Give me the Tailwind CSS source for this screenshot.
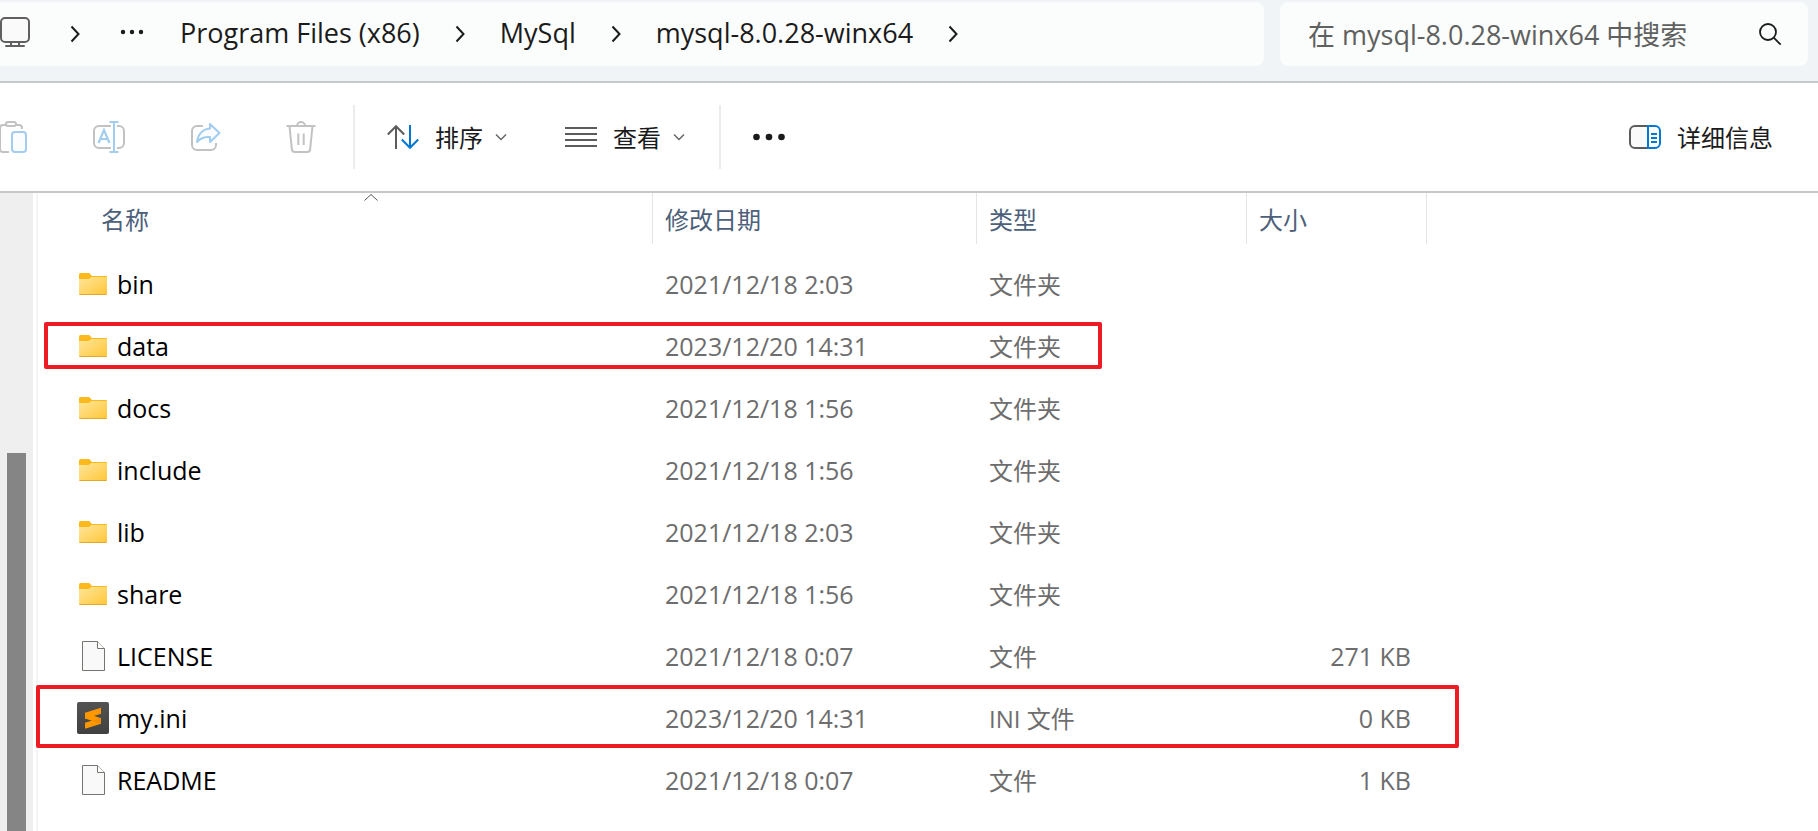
<!DOCTYPE html>
<html lang="zh-CN">
<head>
<meta charset="utf-8">
<meta name="viewport" content="width=device-width, initial-scale=1">
<title>mysql-8.0.28-winx64</title>
<script src="https://cdn.jsdelivr.net/npm/@tailwindcss/browser@4"></script>
</head>
<body class="flex min-h-screen flex-col bg-white font-['Open_Sans','Noto_Sans_CJK_SC',sans-serif] text-2xl text-[#1b1b1b]">

<svg class="absolute size-0" aria-hidden="true">
  <defs>
    <linearGradient id="folder-front" x1="0" y1="0" x2="1" y2="1">
      <stop offset="0" stop-color="#ffe69b"/><stop offset="1" stop-color="#ffc637"/>
    </linearGradient>
    <linearGradient id="editor-tile" x1="0" y1="0" x2="0" y2="1">
      <stop offset="0" stop-color="#535353"/><stop offset="1" stop-color="#404040"/>
    </linearGradient>
  </defs>
  <symbol id="chevron" viewBox="0 0 10 18"><path d="M1.500 1.500 8.500 9l-7 7.500" fill="none" stroke="#1b1b1b" stroke-width="2"/></symbol>
  <symbol id="chevron-down" viewBox="0 0 12 8"><path d="M1 1.500 6 6.500l5-5" fill="none" stroke="#666" stroke-width="1.500"/></symbol>
  <symbol id="folder" viewBox="0 0 32 32">
    <path d="M2 6.500A1.500 1.500 0 0 1 3.500 5H11c1.500 0 2 .6 3 2l1 1h14a1 1 0 0 1 1 1V14H2z" fill="#fbb91c"/>
    <path d="M2 11h8.500c1.500 0 2-.3 3-1.200L14.300 9H29a1 1 0 0 1 1 1v15.500a1.500 1.500 0 0 1-1.500 1.500h-25A1.500 1.500 0 0 1 2 25.500z" fill="url(#folder-front)"/>
    <path d="M2.500 26.500h27" stroke="#e3a72a" stroke-width="1"/>
  </symbol>
  <symbol id="file" viewBox="0 0 32 32">
    <path d="M5.500 1.500h15l7 7v22h-22z" fill="#f9f9f9" stroke="#757570" stroke-width="1"/>
    <path d="M20.500 1.500v7h7" fill="#fff" stroke="#757570" stroke-width="1"/>
  </symbol>
  <symbol id="editor" viewBox="0 0 32 32">
    <rect width="32" height="32" rx="2" fill="url(#editor-tile)"/>
    <path d="M8 10.700 24 5.700v6L14.500 14.700 8 16.700z" fill="#ff9800"/>
    <path d="M8 20.700 24 15.700v6L8 26.700z" fill="#ff9800"/>
    <path d="M8 10.700v5.800l16 5.200v-5.500z" fill="#ff9800"/>
    <path d="M15 18.500 24 16.200v5.500z" fill="#f08c00"/>
  </symbol>
</svg>

<header class="flex h-[83px] items-start gap-4 border-b-2 border-[#c3cacd] bg-[#f1f4f6] pt-0.5 pr-2.5">
  <nav aria-label="路径" class="flex h-16 min-w-0 flex-1 items-center rounded-r-lg bg-[#fbfdfc] pb-1 text-[27px] leading-10 whitespace-nowrap">
    <button aria-label="此电脑" class="mr-10">
      <svg class="h-8 w-[30px]" viewBox="0 0 30 32" fill="none" stroke="#606060" stroke-width="2"><rect x="1" y="2" width="28" height="24" rx="4" fill="#fafafa"/><path d="M11 26v4M19 26v4"/><path d="M6 30h18" stroke-linecap="round"/></svg>
    </button>
    <svg class="mt-1 mr-10 h-[18px] w-2.5" aria-hidden="true"><use href="#chevron"/></svg>
    <button aria-label="更多位置" class="mr-9">
      <svg class="h-6 w-6" viewBox="0 0 24 24" fill="#1b1b1b"><circle cx="3" cy="12" r="2.200"/><circle cx="12" cy="12" r="2.200"/><circle cx="21" cy="12" r="2.200"/></svg>
    </button>
    <ol class="flex items-center gap-[35px]">
      <li class="flex items-center gap-[35px]"><a href="#" class="pt-0.5">Program Files (x86)</a><svg class="mt-1 h-[18px] w-2.5" aria-hidden="true"><use href="#chevron"/></svg></li>
      <li class="flex items-center gap-[35px]"><a href="#" class="pt-0.5">MySql</a><svg class="mt-1 h-[18px] w-2.5" aria-hidden="true"><use href="#chevron"/></svg></li>
      <li class="flex items-center gap-[35px]"><a href="#" class="pt-0.5">mysql-8.0.28-winx64</a><svg class="mt-1 h-[18px] w-2.5" aria-hidden="true"><use href="#chevron"/></svg></li>
    </ol>
  </nav>
  <form class="flex h-16 w-[528px] shrink-0 items-center rounded-lg bg-[#fbfdfc] pr-[26px] pl-7">
    <input type="search" aria-label="搜索" placeholder="在 mysql-8.0.28-winx64 中搜索" class="h-14 min-w-0 flex-1 bg-transparent text-[27px] text-[#1b1b1b] outline-none placeholder:text-[#5f6160]">
    <button type="button" aria-label="开始搜索" class="shrink-0">
      <svg class="h-6 w-6" viewBox="0 0 24 24" fill="none" stroke="#1b1b1b" stroke-width="1.800"><circle cx="10" cy="10" r="8"/><path d="m15.700 15.700 7 7"/></svg>
    </button>
  </form>
</header>

<div role="toolbar" aria-label="命令栏" class="flex h-[110px] items-center border-b-2 border-[#c6c7c9] pr-[45px] whitespace-nowrap">
  <button aria-label="粘贴" class="mr-[65px]">
    <svg class="h-8 w-7" viewBox="0 0 28 32" fill="none" stroke="#c2c2c2" stroke-width="2"><path d="M6 4H3a3 3 0 0 0-3 3v21a3 3 0 0 0 3 3h6M16 4h3a3 3 0 0 1 3 3v1"/><rect x="6" y="1" width="10" height="4" rx="2"/><rect x="12" y="11" width="14" height="20" rx="3" fill="#fafcfe" stroke="#a2cdf0"/></svg>
  </button>
  <button aria-label="重命名" class="mr-[66px]">
    <svg class="h-8 w-8" viewBox="0 0 32 32" fill="none" stroke="#c2c2c2" stroke-width="2"><path d="M18 5H6a5 5 0 0 0-5 5v12a5 5 0 0 0 5 5h12M24 5h2a5 5 0 0 1 5 5v12a5 5 0 0 1-5 5h-2"/><g stroke="#a2cdf0"><path d="M16.500 1h9M16.500 31h9M21 1v30"/><path d="m5.500 22 5.500-13 5.500 13M7.500 18h7" stroke-width="2.200"/></g></svg>
  </button>
  <button aria-label="共享" class="mr-[65px]">
    <svg class="h-8 w-[30px]" viewBox="0 0 30 32" fill="none" stroke="#c2c2c2" stroke-width="2" stroke-linejoin="round"><path d="M12 5H6a5 5 0 0 0-5 5v14a5 5 0 0 0 5 5h14a5 5 0 0 0 5-5v-2"/><path d="m19 3 9.500 9-9.500 9v-5c-6-.3-10 1.500-13 5C7 13 12 8 19 7.500z" fill="#fafcfe" stroke="#a2cdf0"/></svg>
  </button>
  <button aria-label="删除" class="mr-[37px]">
    <svg class="h-8 w-[30px]" viewBox="0 0 30 32" fill="none" stroke="#c2c2c2" stroke-width="2"><path d="M.5 5h29M11 5a4 4 0 0 1 8 0M3.500 5l2.400 23.500A3 3 0 0 0 8.800 31h12.400a3 3 0 0 0 2.900-2.500L26.500 5M12.300 12.500v11.500M17.700 12.500v11.500"/></svg>
  </button>
  <div class="h-16 w-0.5 bg-[#ececec]"></div>
  <button class="ml-8 flex items-center leading-8">
    <svg class="mr-4 h-8 w-8" viewBox="0 0 32 32" fill="none" stroke-width="2"><path d="M9 28V5M.8 13.500 9 5.200l8.200 8.300" stroke="#5c5c5c"/><path d="M23 4v23M14.800 18.500l8.200 8.300 8.200-8.300" stroke="#0078d4"/></svg>
    <span class="pt-0.5">排序</span>
    <svg class="ml-3 h-2 w-3" aria-hidden="true"><use href="#chevron-down"/></svg>
  </button>
  <button class="mr-[34px] ml-[58px] flex items-center leading-8">
    <svg class="mr-4 h-8 w-8" viewBox="0 0 32 32" stroke="#5c5c5c" stroke-width="2"><path d="M0 7h32M0 13h32M0 19h32M0 25h32"/></svg>
    <span class="pt-0.5">查看</span>
    <svg class="ml-3 h-2 w-3" aria-hidden="true"><use href="#chevron-down"/></svg>
  </button>
  <div class="h-16 w-0.5 bg-[#ececec]"></div>
  <button aria-label="查看更多" class="ml-8">
    <svg class="h-8 w-8" viewBox="0 0 32 32" fill="#1b1b1b"><circle cx="3.500" cy="16" r="3.300"/><circle cx="16" cy="16" r="3.300"/><circle cx="28.500" cy="16" r="3.300"/></svg>
  </button>
  <button class="ml-auto flex items-center gap-4 leading-8">
    <svg class="h-8 w-8" viewBox="0 0 32 32" fill="none" stroke-width="2"><path d="M19 5H6a5 5 0 0 0-5 5v12a5 5 0 0 0 5 5h13" fill="#fafafa" stroke="#5c5c5c"/><path d="M19 5h7a5 5 0 0 1 5 5v12a5 5 0 0 1-5 5h-7zM22 13h6M22 17h6M22 21h6" stroke="#0078d4"/></svg>
    <span class="pt-0.5">详细信息</span>
  </button>
</div>

<main class="flex flex-1">
  <div class="flex w-[33px] shrink-0 flex-col bg-[#efefef]">
    <div class="mt-[260px] ml-[7px] w-[19px] flex-1 bg-[#858585]"></div>
  </div>
  <div class="ml-[3px] min-w-0 flex-1 border-l-2 border-[#f5f5f5]">
    <table class="w-[1389px] table-fixed border-separate border-spacing-0 text-left text-[25px] leading-8 text-[#6d6d6d]">
      <colgroup><col class="w-[615px]"><col class="w-[324px]"><col class="w-[270px]"><col class="w-[180px]"></colgroup>
      <thead class="text-2xl leading-8 text-[#4c607a]">
        <tr class="h-[51px] *:border-r *:border-[#e5e5e5] *:p-0 *:pt-0.5 *:font-normal">
          <th scope="col" aria-sort="ascending" class="relative"><button class="ml-[63px]">名称</button>
            <svg class="absolute top-0 left-[326px] h-2 w-3.5" viewBox="0 0 14 8" fill="none" stroke="#555" aria-hidden="true"><path d="m.5 7.500 6.500-6 6.500 6"/></svg></th>
          <th scope="col"><button class="ml-3">修改日期</button></th>
          <th scope="col"><button class="ml-3">类型</button></th>
          <th scope="col"><button class="ml-3">大小</button></th>
        </tr>
      </thead>
      <tbody>
        <tr class="h-[9px]"><td colspan="4" class="p-0"></td></tr>
        <tr class="h-[62px] *:p-0">
          <td><div class="flex items-center gap-2 pl-[39px] text-black"><svg class="h-8 w-8"><use href="#folder"/></svg>bin</div></td>
          <td><div class="pl-3">2021/12/18 2:03</div></td><td><div class="pt-0.5 pl-3 text-2xl">文件夹</div></td><td></td>
        </tr>
        <tr class="relative h-[62px] *:p-0">
          <td><div class="flex items-center gap-2 pl-[39px] text-black"><svg class="h-8 w-8"><use href="#folder"/></svg>data</div>
            <div class="pointer-events-none absolute top-[7px] left-1.5 h-[47px] w-[1058px] rounded-xs border-4 border-[#ed1c24]"></div></td>
          <td><div class="pl-3">2023/12/20 14:31</div></td><td><div class="pt-0.5 pl-3 text-2xl">文件夹</div></td><td></td>
        </tr>
        <tr class="h-[62px] *:p-0">
          <td><div class="flex items-center gap-2 pl-[39px] text-black"><svg class="h-8 w-8"><use href="#folder"/></svg>docs</div></td>
          <td><div class="pl-3">2021/12/18 1:56</div></td><td><div class="pt-0.5 pl-3 text-2xl">文件夹</div></td><td></td>
        </tr>
        <tr class="h-[62px] *:p-0">
          <td><div class="flex items-center gap-2 pl-[39px] text-black"><svg class="h-8 w-8"><use href="#folder"/></svg>include</div></td>
          <td><div class="pl-3">2021/12/18 1:56</div></td><td><div class="pt-0.5 pl-3 text-2xl">文件夹</div></td><td></td>
        </tr>
        <tr class="h-[62px] *:p-0">
          <td><div class="flex items-center gap-2 pl-[39px] text-black"><svg class="h-8 w-8"><use href="#folder"/></svg>lib</div></td>
          <td><div class="pl-3">2021/12/18 2:03</div></td><td><div class="pt-0.5 pl-3 text-2xl">文件夹</div></td><td></td>
        </tr>
        <tr class="h-[62px] *:p-0">
          <td><div class="flex items-center gap-2 pl-[39px] text-black"><svg class="h-8 w-8"><use href="#folder"/></svg>share</div></td>
          <td><div class="pl-3">2021/12/18 1:56</div></td><td><div class="pt-0.5 pl-3 text-2xl">文件夹</div></td><td></td>
        </tr>
        <tr class="h-[62px] *:p-0">
          <td><div class="flex items-center gap-2 pl-[39px] text-black"><svg class="h-8 w-8"><use href="#file"/></svg>LICENSE</div></td>
          <td><div class="pl-3">2021/12/18 0:07</div></td><td><div class="pt-0.5 pl-3 text-2xl">文件</div></td><td><div class="pr-4 text-right">271 KB</div></td>
        </tr>
        <tr class="relative h-[62px] *:p-0">
          <td><div class="flex items-center gap-2 pl-[39px] text-black"><svg class="h-8 w-8"><use href="#editor"/></svg>my.ini</div>
            <div class="pointer-events-none absolute -top-0.5 -left-0.5 h-[63px] w-[1423px] rounded-xs border-4 border-[#ed1c24]"></div></td>
          <td><div class="pl-3">2023/12/20 14:31</div></td><td><div class="pt-0.5 pl-3 text-2xl">INI 文件</div></td><td><div class="pr-4 text-right">0 KB</div></td>
        </tr>
        <tr class="h-[62px] *:p-0">
          <td><div class="flex items-center gap-2 pl-[39px] text-black"><svg class="h-8 w-8"><use href="#file"/></svg>README</div></td>
          <td><div class="pl-3">2021/12/18 0:07</div></td><td><div class="pt-0.5 pl-3 text-2xl">文件</div></td><td><div class="pr-4 text-right">1 KB</div></td>
        </tr>
      </tbody>
    </table>
  </div>
</main>
</body>
</html>
